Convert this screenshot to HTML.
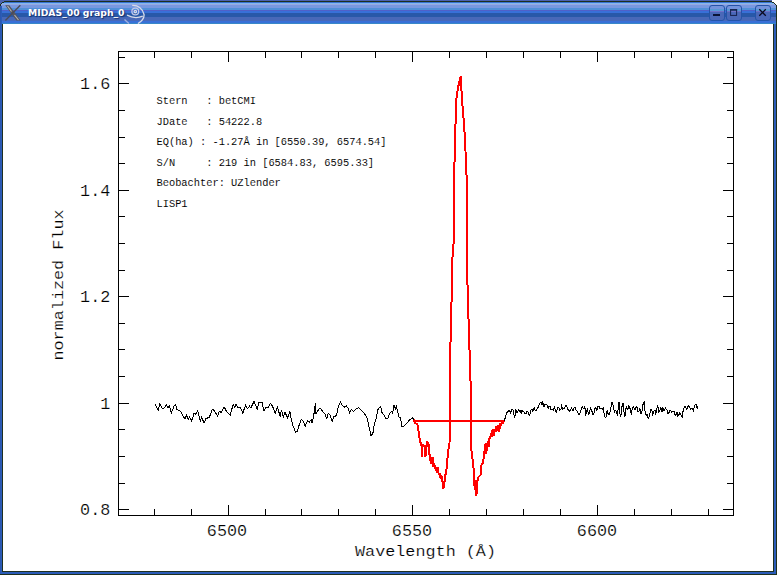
<!DOCTYPE html>
<html><head><meta charset="utf-8"><title>MIDAS_00 graph_0</title>
<style>
html,body{margin:0;padding:0;background:#fff;}
body{width:777px;height:575px;overflow:hidden;position:relative;font-family:"Liberation Mono",monospace;}
#win{position:absolute;left:0;top:0;width:777px;height:575px;background:#2b5cb8;}
#tb{position:absolute;left:0;top:0;width:777px;height:24px;
background:linear-gradient(to bottom,#4a62b0 0,#4a62b0 1px,#1e3020 1px,#1e3020 2px,#3a70d0 2px,#3a70d0 3px,#80b8f0 3px,#80b8f0 4px,#98a8e0 4px,#98a8e0 5px,#7898e0 5px,#7898e0 8px,#5090d8 8px,#5090d8 10px,#5060c8 10px,#5060c8 11px,#3870d8 11px,#3870d8 13px,#2858a8 13px,#2858a8 17px,#4868b8 17px,#4868b8 21px,#3870d8 21px,#3870d8 23px,#3888c8 23px,#3888c8 24px);}
#title{position:absolute;left:28px;top:6px;font:bold 9.25px "DejaVu Sans","Liberation Sans",sans-serif;color:#fff;text-shadow:1px 1px 1px #1a2f6a;white-space:nowrap;line-height:14px;}
#client{position:absolute;left:3px;top:24px;width:770px;height:547px;background:#fff;}
.bd{position:absolute;background:#1e3020;}
.btn{position:absolute;top:5px;width:14px;height:14px;border:1px solid #2454a8;border-radius:3px;background:linear-gradient(to bottom,#7393dc 0,#7393dc 3px,#5898d4 3px,#5898d4 5px,#7070c8 5px,#7070c8 6px,#4a68b8 6px,#4a68b8 14px);}
svg text{font-family:"Liberation Mono",monospace;fill:#000;white-space:pre;}
.big text{stroke:#fff;stroke-width:0.2px;}
.small text{stroke:#fff;stroke-width:0.05px;}
</style></head><body>
<div id="win">
<div id="tb"></div>
<div id="title">MIDAS_00 graph_0</div>
<svg style="position:absolute;left:0;top:0" width="777" height="24" viewBox="0 0 777 24">
 <!-- corners -->
 <g shape-rendering="crispEdges">
  <rect x="0" y="0" width="4" height="2" fill="#4a62b0"/>
  <rect x="0" y="2" width="2" height="1" fill="#4a62b0"/>
  <rect x="0" y="3" width="1" height="1" fill="#4a62b0"/>
  <rect x="2" y="2" width="2" height="1" fill="#1e3020"/>
  <rect x="1" y="3" width="1" height="1" fill="#1e3020"/>
  <rect x="0" y="4" width="1" height="2" fill="#1e3020"/>
  <rect x="0" y="6" width="2" height="18" fill="#2b5cb8"/>
  <rect x="772" y="0" width="5" height="2" fill="#fff"/>
  <rect x="774" y="2" width="3" height="1" fill="#fff"/>
  <rect x="775" y="3" width="2" height="1" fill="#fff"/>
  <rect x="776" y="4" width="1" height="1" fill="#fff"/>
  <rect x="772" y="2" width="2" height="1" fill="#1e3020"/>
  <rect x="774" y="3" width="1" height="1" fill="#1e3020"/>
  <rect x="775" y="4" width="1" height="1" fill="#1e3020"/>
  <rect x="776" y="5" width="1" height="19" fill="#1e3020"/>
 </g>
 <!-- X icon -->
 <g fill="none">
  <polygon points="5.2,5.2 9.3,5.2 20.6,20.4 16.4,20.4" fill="#55555f"/>
  <path d="M7.5 6 L11.5 11.5 M14.5 15 L18.5 20" stroke="#b0b0b0" stroke-width="1.2"/>
  <path d="M20.3 5.2 L5.4 20.4" stroke="#4c4c58" stroke-width="1.4"/>
 </g>
 <!-- swirl emblem -->
 <g fill="none" stroke="#d6dae8" stroke-width="1.35">
  <circle cx="135.3" cy="11.5" r="1.2"/>
  <circle cx="135.3" cy="11.5" r="3.4" stroke="#c0c8e8"/>
  <path d="M132.2 5.4 C138 5 143 9 144 14.4 C144.5 18 141.5 22 137.9 23.5"/>
  <path d="M124.5 19.5 C126 21 127.5 22.3 129 23.5" stroke="#9fb0e0"/>
  <path d="M127 15.2 C131 17.3 137 18.5 142.8 16.2"/>
 </g>
 <!-- button glyphs -->
</svg>
<div class="btn" style="left:709px"></div>
<div class="btn" style="left:726px"></div>
<div class="btn" style="left:755px"></div>
<svg style="position:absolute;left:0;top:0" width="777" height="24" viewBox="0 0 777 24">
 <g stroke="#0a1436" fill="none">
  <rect x="713" y="14" width="7" height="2" fill="#0a1436" stroke="none" shape-rendering="crispEdges"/>
  <rect x="730.6" y="10" width="6" height="5.4" stroke-width="1" stroke="#14204c"/>
  <line x1="730" y1="9.8" x2="737.2" y2="9.8" stroke-width="1.4" stroke="#14204c"/>
  <path d="M759.3 9.3 L765.8 15.8 M765.8 9.3 L759.3 15.8" stroke="#0a0a1e" stroke-width="1.25"/>
 </g>
</svg>
<div class="bd" style="left:2px;top:24px;width:1px;height:548px"></div>
<div class="bd" style="left:773px;top:24px;width:1px;height:548px"></div>
<div class="bd" style="left:776px;top:6px;width:1px;height:569px"></div>
<div class="bd" style="left:2px;top:571px;width:772px;height:1px"></div>
<div class="bd" style="left:0;top:574px;width:777px;height:1px"></div>
<div id="client"></div>
<div style="position:absolute;left:0;top:6px;width:1px;height:568px;background:#2a57b0"></div>
<svg style="position:absolute;left:0;top:0" width="777" height="575" viewBox="0 0 777 575">
 <g stroke="#000" stroke-width="1" fill="none" shape-rendering="crispEdges">
  <rect x="118.5" y="51.5" width="615" height="464"/>
<line x1="154.5" y1="515" x2="154.5" y2="509"/>
<line x1="154.5" y1="52" x2="154.5" y2="58"/>
<line x1="191.5" y1="515" x2="191.5" y2="509"/>
<line x1="191.5" y1="52" x2="191.5" y2="58"/>
<line x1="228.5" y1="515" x2="228.5" y2="505"/>
<line x1="228.5" y1="52" x2="228.5" y2="62"/>
<line x1="265.5" y1="515" x2="265.5" y2="509"/>
<line x1="265.5" y1="52" x2="265.5" y2="58"/>
<line x1="301.5" y1="515" x2="301.5" y2="509"/>
<line x1="301.5" y1="52" x2="301.5" y2="58"/>
<line x1="338.5" y1="515" x2="338.5" y2="509"/>
<line x1="338.5" y1="52" x2="338.5" y2="58"/>
<line x1="375.5" y1="515" x2="375.5" y2="509"/>
<line x1="375.5" y1="52" x2="375.5" y2="58"/>
<line x1="412.5" y1="515" x2="412.5" y2="505"/>
<line x1="412.5" y1="52" x2="412.5" y2="62"/>
<line x1="449.5" y1="515" x2="449.5" y2="509"/>
<line x1="449.5" y1="52" x2="449.5" y2="58"/>
<line x1="486.5" y1="515" x2="486.5" y2="509"/>
<line x1="486.5" y1="52" x2="486.5" y2="58"/>
<line x1="523.5" y1="515" x2="523.5" y2="509"/>
<line x1="523.5" y1="52" x2="523.5" y2="58"/>
<line x1="560.5" y1="515" x2="560.5" y2="509"/>
<line x1="560.5" y1="52" x2="560.5" y2="58"/>
<line x1="597.5" y1="515" x2="597.5" y2="505"/>
<line x1="597.5" y1="52" x2="597.5" y2="62"/>
<line x1="634.5" y1="515" x2="634.5" y2="509"/>
<line x1="634.5" y1="52" x2="634.5" y2="58"/>
<line x1="671.5" y1="515" x2="671.5" y2="509"/>
<line x1="671.5" y1="52" x2="671.5" y2="58"/>
<line x1="708.5" y1="515" x2="708.5" y2="509"/>
<line x1="708.5" y1="52" x2="708.5" y2="58"/>
<line x1="119" y1="509.5" x2="129" y2="509.5"/>
<line x1="733" y1="509.5" x2="723" y2="509.5"/>
<line x1="119" y1="483.5" x2="125" y2="483.5"/>
<line x1="733" y1="483.5" x2="727" y2="483.5"/>
<line x1="119" y1="456.5" x2="125" y2="456.5"/>
<line x1="733" y1="456.5" x2="727" y2="456.5"/>
<line x1="119" y1="429.5" x2="125" y2="429.5"/>
<line x1="733" y1="429.5" x2="727" y2="429.5"/>
<line x1="119" y1="403.5" x2="129" y2="403.5"/>
<line x1="733" y1="403.5" x2="723" y2="403.5"/>
<line x1="119" y1="376.5" x2="125" y2="376.5"/>
<line x1="733" y1="376.5" x2="727" y2="376.5"/>
<line x1="119" y1="349.5" x2="125" y2="349.5"/>
<line x1="733" y1="349.5" x2="727" y2="349.5"/>
<line x1="119" y1="323.5" x2="125" y2="323.5"/>
<line x1="733" y1="323.5" x2="727" y2="323.5"/>
<line x1="119" y1="296.5" x2="129" y2="296.5"/>
<line x1="733" y1="296.5" x2="723" y2="296.5"/>
<line x1="119" y1="270.5" x2="125" y2="270.5"/>
<line x1="733" y1="270.5" x2="727" y2="270.5"/>
<line x1="119" y1="243.5" x2="125" y2="243.5"/>
<line x1="733" y1="243.5" x2="727" y2="243.5"/>
<line x1="119" y1="216.5" x2="125" y2="216.5"/>
<line x1="733" y1="216.5" x2="727" y2="216.5"/>
<line x1="119" y1="190.5" x2="129" y2="190.5"/>
<line x1="733" y1="190.5" x2="723" y2="190.5"/>
<line x1="119" y1="163.5" x2="125" y2="163.5"/>
<line x1="733" y1="163.5" x2="727" y2="163.5"/>
<line x1="119" y1="137.5" x2="125" y2="137.5"/>
<line x1="733" y1="137.5" x2="727" y2="137.5"/>
<line x1="119" y1="110.5" x2="125" y2="110.5"/>
<line x1="733" y1="110.5" x2="727" y2="110.5"/>
<line x1="119" y1="83.5" x2="129" y2="83.5"/>
<line x1="733" y1="83.5" x2="723" y2="83.5"/>
<line x1="119" y1="57.5" x2="125" y2="57.5"/>
<line x1="733" y1="57.5" x2="727" y2="57.5"/>
 </g>
 <g fill="none" stroke="#000" stroke-width="1" stroke-linejoin="miter" shape-rendering="crispEdges">
  <polyline points="155.0,404.1 158.1,410.2 159.9,403.5 162.3,408.9 164.4,408.0 166.6,404.8 168.0,407.7 169.5,405.9 171.3,413.1 174.3,405.3 175.6,404.4 177.0,409.8 179.4,410.2 181.5,412.5 183.3,416.7 185.1,418.5 186.6,415.2 188.2,419.2 189.6,417.0 191.8,421.0 194.1,413.1 195.9,414.3 197.7,410.7 200.5,422.4 201.4,417.0 204.1,422.8 205.9,418.8 209.5,417.0 212.2,409.5 214.0,410.2 217.6,416.1 219.4,411.3 221.2,412.5 224.2,407.1 226.6,411.6 230.2,415.2 233.2,404.1 234.7,407.1 236.1,404.4 238.3,408.0 240.1,407.1 242.8,413.1 245.5,405.3 247.3,408.9 249.5,406.2 250.9,407.7 254.1,401.2 257.2,409.5 259.0,402.6 260.3,403.0 262.1,402.3 263.9,410.7 266.2,407.1 268.0,408.0 270.4,403.5 272.5,406.2 275.2,413.1 277.6,407.1 280.1,416.7 281.5,409.8 283.3,417.0 285.0,412.5 287.7,417.9 290.0,411.6 291.3,419.7 293.1,426.0 295.5,432.3 297.3,431.4 299.1,425.1 301.2,419.7 303.0,420.6 305.2,426.0 307.5,421.0 309.3,422.1 311.1,419.7 312.0,423.3 313.8,415.2 315.3,403.5 316.0,413.4 317.8,410.7 320.1,408.0 322.8,411.6 325.0,414.3 326.8,418.5 328.2,413.1 330.0,415.2 332.2,421.0 333.6,417.0 336.4,415.6 338.2,407.1 340.5,402.3 342.3,405.3 344.5,407.1 346.3,405.9 348.4,408.4 349.5,413.1 351.3,409.5 353.5,411.3 356.2,408.9 358.5,407.7 360.7,409.5 363.4,412.5 366.1,416.1 367.5,418.8 368.8,426.0 371.1,435.9 372.9,433.2 374.2,425.1 376.0,418.8 377.8,409.8 379.1,407.7 380.9,406.6 381.4,411.6 384.1,415.2 385.9,418.5 387.7,418.8 389.5,413.4 391.7,411.6 392.7,413.4 394.0,404.8 395.3,408.9 396.4,406.6 397.6,411.6 398.9,417.0 400.3,417.4 402.1,426.9 403.9,426.0 406.6,423.3 409.3,420.3 412.6,417.4 413.8,420.6"/>
  <polyline points="504.2,420.5 505.1,418.3 506.8,412.5 509.4,410.4 510.8,413.1 512.0,408.7 513.3,410.4 514.3,417.4 514.5,417.4 515.1,415.5 515.7,409.3 516.6,412.4 517.5,412.0 518.4,409.6 519.3,411.1 520.2,411.0 521.1,413.5 522.0,410.5 522.9,411.7 523.8,411.9 524.7,413.8 525.9,413.8 527.1,411.1 528.2,412.4 529.2,415.6 530.1,413.8 531.0,410.2 531.9,409.0 532.8,412.0 533.5,408.4 534.3,408.1 535.2,410.5 536.1,411.1 537.2,408.4 538.2,407.5 539.3,403.9 540.4,402.7 541.0,402.2 541.5,404.8 542.1,405.0 542.7,402.1 543.4,403.4 544.0,406.6 544.9,404.2 545.8,404.5 547.0,404.9 548.2,408.4 549.1,405.9 550.0,406.3 551.1,409.7 552.3,409.3 553.4,410.0 554.5,407.5 555.5,411.1 556.6,412.0 557.5,407.8 558.4,407.5 559.1,407.9 559.9,410.2 560.8,409.5 561.7,405.7 562.6,408.9 563.5,408.4 564.5,408.5 565.6,405.2 566.4,405.1 567.1,407.0 568.2,410.1 569.2,411.1 570.4,410.6 571.6,408.1 572.5,410.5 573.4,410.2 574.3,407.0 575.2,407.5 576.4,410.6 577.5,411.1 578.4,414.5 579.3,414.7 580.2,412.9 581.1,409.3 582.2,406.6 583.3,408.1 584.0,408.7 584.7,405.7 585.1,409.3 585.5,414.7 586.4,413.3 587.3,408.4 588.0,412.3 588.7,413.8 589.6,412.7 590.5,407.5 591.4,410.6 592.3,412.0 593.0,414.6 593.7,414.7 594.4,410.1 595.0,408.4 595.9,407.4 596.8,410.2 598.0,406.6 599.1,406.6 600.2,408.8 601.3,408.4 602.2,409.2 603.1,408.1 603.8,412.8 604.5,414.7 605.1,417.9 605.8,417.1 606.5,415.7 607.1,410.2 607.8,413.8 608.5,413.8 609.2,414.7 610.0,412.0 610.6,410.5 611.2,404.8 611.9,402.8 612.5,402.7 613.4,406.2 614.3,412.0 615.0,410.3 615.7,410.2 616.6,411.7 617.5,415.6 618.2,407.6 619.0,401.6 619.7,411.2 620.4,417.4 621.2,414.1 622.0,406.6 622.6,403.8 623.3,403.9 624.0,412.0 624.7,417.4 625.5,412.9 626.2,406.6 627.1,408.8 628.0,409.3 628.6,405.6 629.2,406.3 629.6,408.4 630.0,408.4 630.7,412.7 631.4,413.8 632.0,409.8 632.7,407.5 633.6,406.8 634.5,409.3 635.4,409.6 636.3,406.6 637.2,407.3 638.1,412.0 639.0,411.2 639.9,408.4 640.5,413.1 641.2,413.5 641.9,411.5 642.6,406.6 643.5,402.1 644.4,401.6 644.8,409.2 645.3,413.8 646.2,415.2 647.1,414.7 647.5,414.7 648.0,418.3 648.9,417.5 649.8,413.8 650.5,410.0 651.3,409.3 651.9,409.9 652.5,414.7 653.4,413.5 654.3,410.2 655.0,410.1 655.6,413.8 656.5,411.9 657.4,405.7 658.1,407.1 658.8,412.0 659.7,411.3 660.6,407.5 661.4,408.5 662.1,412.0 662.5,408.2 662.8,407.5 663.5,410.5 664.2,410.2 665.5,408.1 666.9,409.9 667.8,413.5 668.7,413.5 669.6,410.8 670.5,410.2 671.9,412.2 673.2,411.7 674.1,411.0 675.0,414.7 675.8,415.3 676.5,412.9 677.1,412.9 677.7,416.5 678.6,415.7 679.5,412.0 680.1,415.0 680.8,413.8 681.5,416.4 682.3,417.1 683.0,411.6 683.7,408.4 684.6,406.2 685.5,406.6 686.4,409.0 687.3,408.1 688.4,405.7 689.5,406.3 690.5,409.3 691.6,408.4 692.5,408.2 693.4,412.0 694.3,406.3 695.2,404.8 696.1,404.7 697.0,407.5 697.3,407.0 697.6,409.3"/>
 </g>
 <g fill="none" stroke="#f00" stroke-width="2" stroke-linejoin="bevel" shape-rendering="crispEdges">
  <polyline points="413.6,419.9 415.0,422.7 417.5,424.7 418.4,430.3 419.1,435.9 419.8,440.1 420.8,443.6 421.5,446.3 421.6,456.8 422.2,446.3 423.0,444.2 423.9,447.0 424.4,444.9 425.3,447.7 425.5,456.5 426.1,447.0 426.8,444.9 427.5,441.5 427.9,447.0 428.6,444.2 429.2,451.2 429.6,455.4 430.3,458.2 430.8,464.4 431.4,456.8 432.0,461.0 432.5,456.8 433.1,467.2 433.8,463.7 434.5,465.1 435.2,467.9 435.9,470.7 436.6,467.2 437.2,472.8 438.1,467.2 438.6,474.2 439.8,473.5 440.7,478.4 441.4,474.9 442.3,480.5 442.8,483.9 443.4,488.8 443.9,483.2 444.8,480.5 445.3,474.9 446.3,473.5 447.0,459.6 448.1,456.8 448.7,445.6 449.5,442.9 449.8,428.9 450.1,415.0 449.7,400 449.7,373 450.7,335.5 451.6,298 452.5,257 453.8,240 453.8,181 455,149.5 455.7,115 456.6,96.3 458.8,83.8 460.7,76 461.3,87 462.2,102.6 463.8,121 465,140 466,162 467,187 467,240 467.6,293 468.8,327.7 470,365 471.3,406 471.1,420.9 471.5,450.5 472.9,462.7 474.3,474.8 474.6,489.6 475.5,480.1 476.4,495.7 477.2,483.6 478.1,477.5 480.7,474.8 481.2,465.3 483.0,462.7 483.7,457.4 484.4,455.7 484.7,444.4 485.6,454.0 486.5,443.5 487.3,450.5 487.9,440.9 488.7,447.0 489.2,439.2 490.3,437.4 491.2,433.1 491.9,436.6 492.6,428.7 493.8,435.7 494.8,429.6 495.7,431.7 496.4,426.5 497.8,431.0 498.3,424.7 499.2,432.2 500.0,423.0 501.1,426.1 501.8,421.8 502.7,424.0 504.2,420.5"/>
  <line x1="413.4" y1="421" x2="504.2" y2="421"/>
 </g>
 <g font-size="16.8px" text-anchor="end" class="big">
  <text x="110.3" y="89">1.6</text>
  <text x="110.3" y="195.5">1.4</text>
  <text x="110.3" y="301.8">1.2</text>
  <text x="110.3" y="408.6">1</text>
  <text x="110.3" y="514.6">0.8</text>
 </g>
 <g font-size="16.8px" text-anchor="middle" class="big">
  <text x="227" y="536">6500</text>
  <text x="412" y="536">6550</text>
  <text x="597" y="536">6600</text>
  <text transform="translate(425.5,555.5) scale(1,0.9)">Wavelength (Å)</text>
  <text transform="translate(63,285) rotate(-90) scale(1,0.88)">normalized Flux</text>
 </g>
 <g font-size="10.36px" class="small">
  <text x="156.5" y="104">Stern   : betCMI</text>
  <text x="156.5" y="124.5">JDate   : 54222.8</text>
  <text x="156.5" y="145">EQ(ha) : -1.27Å in [6550.39, 6574.54]</text>
  <text x="156.5" y="165.5">S/N     : 219 in [6584.83, 6595.33]</text>
  <text x="156.5" y="186">Beobachter: UZlender</text>
  <text x="156.5" y="206.5">LISP1</text>
 </g>
</svg>
</div>
</body></html>
